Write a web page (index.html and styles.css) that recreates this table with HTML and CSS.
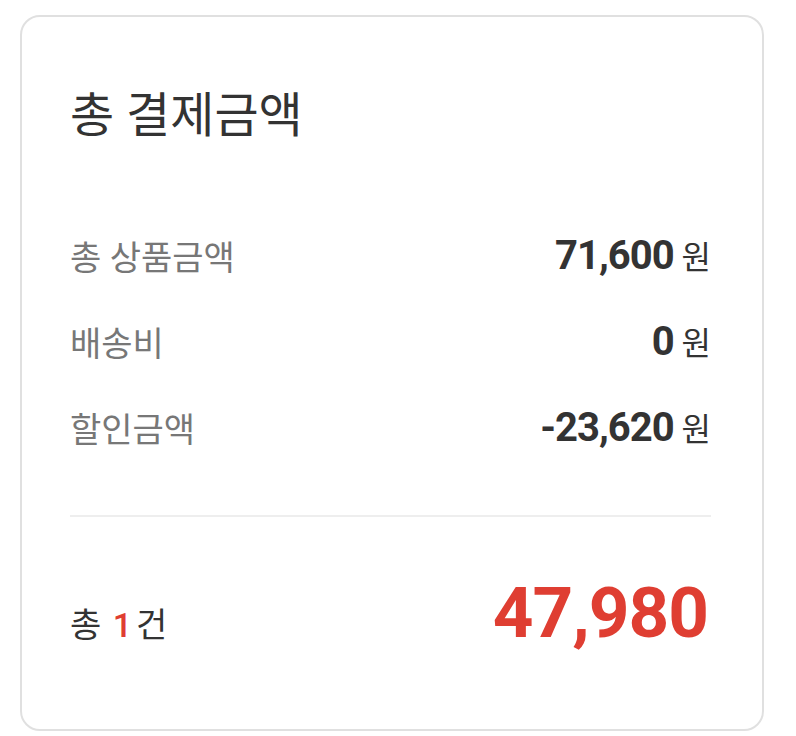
FILE: index.html
```html
<!DOCTYPE html>
<html lang="ko">
<head>
    <meta charset="UTF-8">
    <meta name="viewport" content="width=device-width, initial-scale=1.0">
    <title>총 결제금액</title>
    <link rel="stylesheet" href="styles.css">
</head>
<body>
    <div class="summary-card">
        <h2 class="summary-title">총 결제금액</h2>

        <ul class="price-list">
            <li class="price-row">
                <span class="price-label">총 상품금액</span>
                <span class="price-value"><strong>71,600</strong> 원</span>
            </li>
            <li class="price-row">
                <span class="price-label">배송비</span>
                <span class="price-value"><strong>0</strong> 원</span>
            </li>
            <li class="price-row">
                <span class="price-label">할인금액</span>
                <span class="price-value"><strong>-23,620</strong> 원</span>
            </li>
        </ul>

        <div class="total-row">
            <span class="total-count">총 <em>1</em>건</span>
            <span class="total-price">47,980</span>
        </div>
    </div>
</body>
</html>
```

FILE: styles.css
```css
* {
    margin: 0;
    padding: 0;
    box-sizing: border-box;
}

body {
    font-family: Roboto, "Noto Sans CJK KR", sans-serif;
    background: #fff;
    color: #333;
    padding: 15px 32px 0 20px;
}

.summary-card {
    width: 744px;
    height: 716px;
    border: 2px solid #e0e0e0;
    border-radius: 20px;
    padding: 75px 51px 0 48px;
}

.summary-title {
    font-size: 48px;
    font-weight: 400;
    line-height: 1;
    color: #333;
}

.price-list {
    list-style: none;
    margin-top: 72px;
    padding-bottom: 45px;
    border-bottom: 2px solid #eee;
}

.price-row {
    display: flex;
    justify-content: space-between;
    align-items: center;
    height: 86px;
}

.price-label {
    font-size: 34px;
    color: #777;
}

.price-value {
    font-size: 32px;
    color: #333;
}

.price-value strong {
    font-size: 40px;
    font-weight: 700;
    letter-spacing: -1px;
}

.total-row {
    display: flex;
    justify-content: space-between;
    align-items: baseline;
    margin-top: 54px;
}

.total-count {
    font-size: 34px;
    color: #333;
}

.total-count em {
    font-style: normal;
    font-weight: 500;
    color: #df3e32;
    margin: 0 4px 0 3px;
}

.total-price {
    font-size: 71px;
    font-weight: 700;
    letter-spacing: -1px;
    color: #df3e32;
    margin-right: 3px;
}
```
